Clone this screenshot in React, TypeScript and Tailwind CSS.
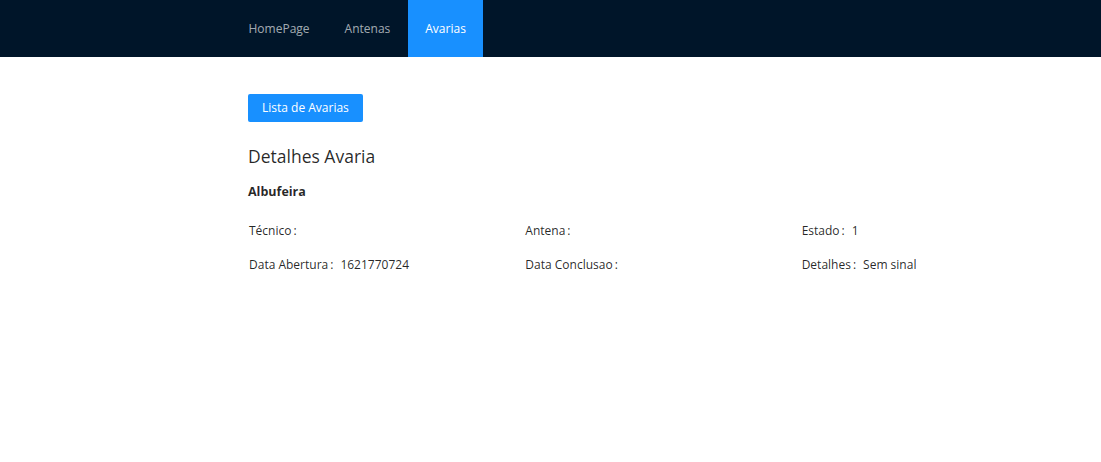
const font = { fontFamily: '"Segoe UI", "Open Sans", "Noto Sans", sans-serif' };

function Item({ label, value }: { label: string; value?: string }) {
  return (
    <div className="flex items-baseline text-[12px] leading-[19px] text-[#000000d9]">
      <span>{label}</span>
      <span className="ml-[2px] mr-[7px]">:</span>
      <span>{value}</span>
    </div>
  );
}

export default function App() {
  const menu = ['HomePage', 'Antenas', 'Avarias'];
  return (
    <div className="min-h-[462px] bg-white" style={font}>
      <header className="flex h-[57px] bg-[#001529] pl-[231px]">
        {menu.map((m) => (
          <a
            key={m}
            className={
              m === 'Avarias'
                ? 'flex items-center bg-[#1890ff] px-[17.5px] text-[12px] text-white'
                : 'flex items-center px-[17.5px] text-[12px] text-[#ffffffa6]'
            }
          >
            {m}
          </a>
        ))}
      </header>
      <main className="pl-[248px] pr-[23px] pt-[37px]">
        <button className="h-[28px] rounded-[2px] bg-[#1890ff] px-[14px] text-[12px] text-white">
          Lista de Avarias
        </button>
        <h2 className="mt-[20px] text-[17.5px] font-medium leading-[28px] text-[#000000d9]">Detalhes Avaria</h2>
        <h3 className="mt-[12px] text-[12.5px] font-bold leading-[20px] text-[#000000d9]">Albufeira</h3>
        <div className="mt-[19px] grid grid-cols-3 gap-y-[15px] pl-px">
          <Item label="Técnico" />
          <Item label="Antena" />
          <Item label="Estado" value="1" />
          <Item label="Data Abertura" value="1621770724" />
          <Item label="Data Conclusao" />
          <Item label="Detalhes" value="Sem sinal" />
        </div>
      </main>
    </div>
  );
}
